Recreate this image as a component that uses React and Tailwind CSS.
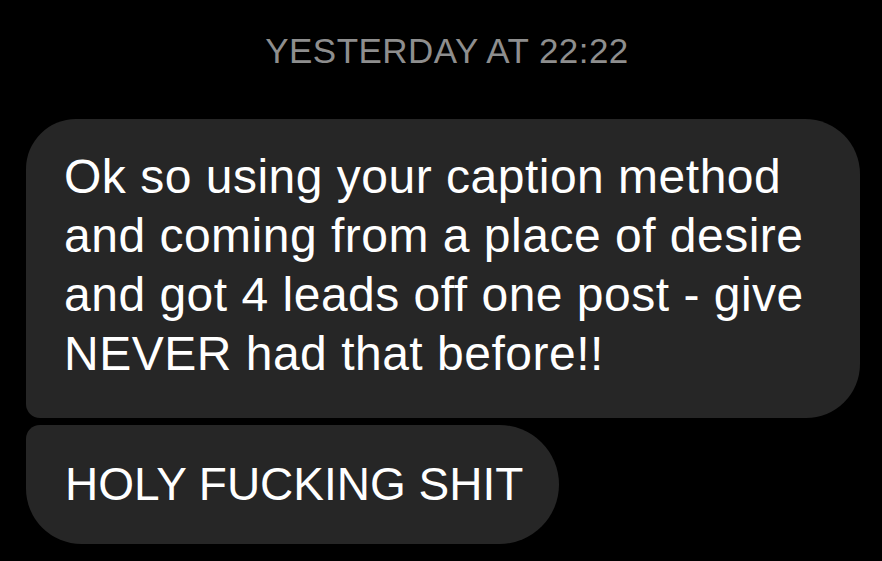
import React from "react";

const lines = [
  "Ok so using your caption method",
  "and coming from a place of desire",
  "and got 4 leads off one post - give",
  "NEVER had that before!!",
];

const App = () => {
  return (
    <div className="w-[882px] h-[561px] bg-black overflow-hidden font-['Liberation_Sans',Arial,sans-serif]">
      <div className="pt-[33px] pl-[12px] text-center text-[35px] leading-[35px] tracking-[0.45px] text-[#8e8e8e]">
        YESTERDAY AT 22:22
      </div>
      <div className="mt-[51px] pl-[26px] flex flex-col gap-[7px]">
        <div className="w-[834px] h-[299px] bg-[#262626] rounded-tl-[50px] rounded-tr-[55px] rounded-br-[54px] rounded-bl-[14px] pl-[38px] pt-[28px] text-[48px] leading-[59px] tracking-[0.5px] text-white">
          {lines.map((line) => (
            <div key={line}>{line}</div>
          ))}
        </div>
        <div className="w-[533px] h-[119px] bg-[#262626] rounded-tl-[14px] rounded-bl-[56px] rounded-r-[60px] pl-[39px] flex items-center text-[46px] text-white">
          HOLY FUCKING SHIT
        </div>
      </div>
    </div>
  );
};

export default App;
